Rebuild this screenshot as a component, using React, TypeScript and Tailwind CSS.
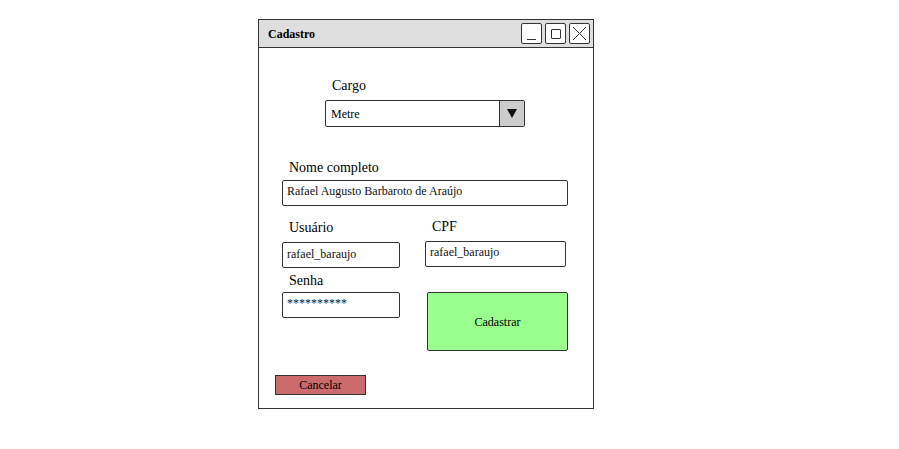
import React from 'react';

const serif = { fontFamily: '"Liberation Serif", "Times New Roman", serif' };

const Label: React.FC<{ text: string; className?: string }> = ({ text, className }) => (
  <div className={`text-[14px] leading-[18px] text-black ${className || ''}`}>{text}</div>
);

const Field: React.FC<{ value: string; className?: string }> = ({ value, className }) => (
  <div className={`border border-[#333] rounded-[2px] bg-white px-[4px] pt-[2px] text-[12px] leading-[16px] text-[#111] ${className || ''}`}>
    {value}
  </div>
);

const App: React.FC = () => {
  return (
    <div className="w-[899px] h-[449px] bg-white overflow-hidden" style={serif}>
      <div className="ml-[258px] mt-[19px] w-[336px] h-[390px] border border-[#333] flex flex-col">
        {/* Title bar */}
        <div className="h-[28px] bg-[#dedede] border-b border-[#333] flex items-center justify-between pl-[9px] pr-[3px] shrink-0">
          <span className="text-[12px] font-bold text-black">Cadastro</span>
          <div className="flex gap-[3px]">
            <div className="w-[21px] h-[21px] border border-[#333] rounded-[2px] bg-white flex items-end justify-center pb-[3px]">
              <div className="w-[9px] h-[1px] bg-[#333]" />
            </div>
            <div className="w-[21px] h-[21px] border border-[#333] rounded-[2px] bg-white flex items-center justify-center">
              <div className="w-[10px] h-[10px] border border-[#333] rounded-[1px]" />
            </div>
            <div className="w-[21px] h-[21px] border border-[#333] rounded-[2px] bg-white flex items-center justify-center">
              <svg width="15" height="15" viewBox="0 0 15 15">
                <path d="M1 1 L14 14 M14 1 L1 14" stroke="#333" strokeWidth="1" fill="none" />
              </svg>
            </div>
          </div>
        </div>

        {/* Body */}
        <div className="flex flex-col">
          <Label text="Cargo" className="ml-[73px] mt-[29px]" />
          <div className="ml-[66px] mt-[5px] w-[200px] h-[27px] border border-[#333] rounded-[2px] flex">
            <div className="flex-1 text-[12px] leading-[16px] px-[5px] pt-[5px]">Metre</div>
            <div className="w-[25px] border-l border-[#333] bg-[#cccccc] flex items-center justify-center">
              <svg width="10" height="9" viewBox="0 0 10 9">
                <path d="M0 0 L10 0 L5 9 Z" fill="#111" />
              </svg>
            </div>
          </div>

          <Label text="Nome completo" className="ml-[30px] mt-[32px]" />
          <Field value="Rafael Augusto Barbaroto de Araújo" className="ml-[23px] mt-[3px] w-[286px] h-[26px]" />

          <div className="flex mt-[12px]">
            <div className="ml-[23px] w-[118px] flex flex-col">
              <Label text="Usuário" className="ml-[7px] mt-[1px]" />
              <Field value="rafael_baraujo" className="mt-[5px] h-[26px] pt-[3px]" />
            </div>
            <div className="ml-[25px] w-[141px] flex flex-col">
              <Label text="CPF" className="ml-[7px]" />
              <Field value="rafael_baraujo" className="mt-[5px] h-[26px]" />
            </div>
          </div>

          <div className="flex mt-[4px]">
            <div className="ml-[23px] w-[118px] flex flex-col">
              <Label text="Senha" className="ml-[7px]" />
              <Field value="**********" className="mt-[2px] h-[26px]" />
            </div>
            <button className="ml-[27px] mt-[20px] w-[141px] h-[59px] border border-[#333] rounded-[2px] bg-[#99ff8f] text-[12px] text-black">
              Cadastrar
            </button>
          </div>

          <button className="ml-[16px] mt-[24px] w-[91px] h-[20px] border border-[#333] bg-[#cc6b6b] text-[12px] leading-[16px] text-black">
            Cancelar
          </button>
        </div>
      </div>
    </div>
  );
};

export default App;
